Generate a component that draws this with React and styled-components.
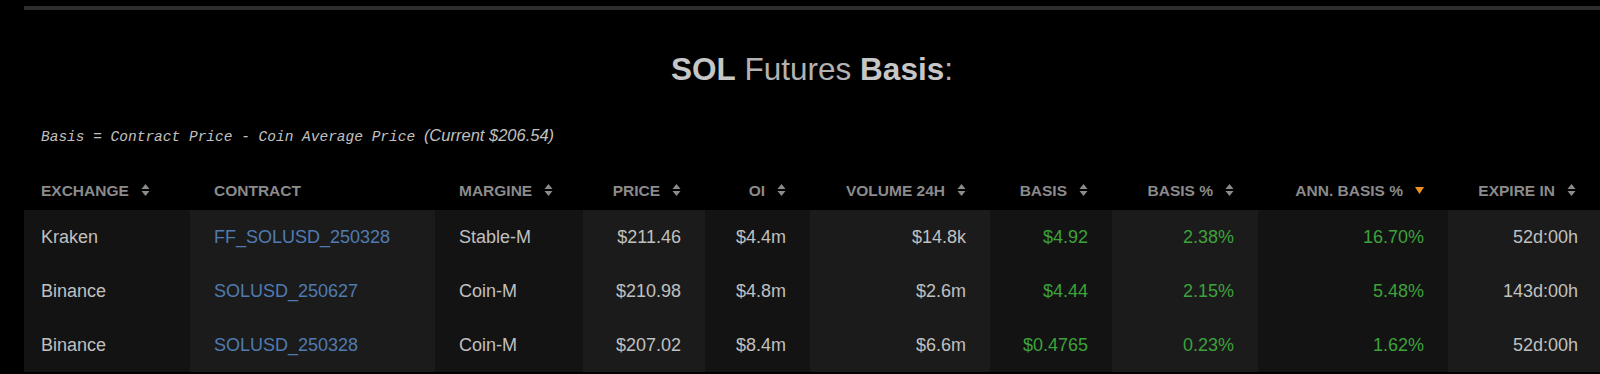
import React from "react";
import styled, { createGlobalStyle } from "styled-components";

const GlobalStyle = createGlobalStyle`
  html, body {
    margin: 0;
    background: #000;
    overflow: hidden;
  }
`;

const Page = styled.div`
  font-family: "Liberation Sans", Arial, Helvetica, sans-serif;
  background: #000;
  padding: 6px 0 0 24px;
  min-height: 374px;
  box-sizing: border-box;
`;

const Card = styled.section`
  border-top: 4px solid #2e2e2e;
`;

const Title = styled.h2`
  margin: 41px 0 0;
  text-align: center;
  font-size: 31.5px;
  line-height: 36px;
  font-weight: normal;
  color: #b2b2b2;

  b {
    color: #c6c6c6;
    font-weight: bold;
  }
`;

const Formula = styled.div`
  margin: 38px 0 0 17px;
  line-height: 20px;
  color: #c0c0c0;
  font-style: italic;
`;

const Mono = styled.span`
  font-family: "Liberation Mono", "DejaVu Sans Mono", monospace;
  font-size: 14.5px;
`;

const Current = styled.span`
  font-family: "Liberation Sans", Arial, sans-serif;
  font-size: 16.5px;
`;

const Table = styled.table`
  margin-top: 24px;
  width: 1576px;
  table-layout: fixed;
  border-collapse: collapse;
`;

const Th = styled.th`
  height: 39px;
  padding: 0 24px;
  padding-left: ${(p) => (p.$first ? "17px" : "24px")};
  text-align: ${(p) => (p.$right ? "right" : "left")};
  font-size: 15.5px;
  font-weight: bold;
  color: #8b8b8b;
  text-transform: uppercase;
  white-space: nowrap;
  vertical-align: middle;
`;

const Row = styled.tr`
  height: 54px;

  td:nth-child(odd) {
    background: #131313;
  }
  td:nth-child(even) {
    background: #1b1b1b;
  }
`;

const Td = styled.td`
  padding: 0 24px;
  padding-left: ${(p) => (p.$first ? "17px" : "24px")};
  padding-right: ${(p) => (p.$last ? "22px" : "24px")};
  text-align: ${(p) => (p.$right ? "right" : "left")};
  font-size: 18px;
  color: ${(p) => (p.$green ? "#3da23a" : "#c0c0c0")};
  white-space: nowrap;
  vertical-align: middle;
`;

const Link = styled.a`
  color: #4f7bb2;
  text-decoration: none;
`;

const SortIcon = styled.svg`
  width: 9px;
  height: 14px;
  margin-left: 12px;
  vertical-align: -1px;
`;

const Sort = ({ active }) => (
  <SortIcon viewBox="0 0 9 14">
    {active ? (
      <path d="M0 4 L9 4 L4.5 11 Z" fill="#f0921f" />
    ) : (
      <>
        <path d="M0.5 6 L4.5 1 L8.5 6 Z" fill="#8b8b8b" />
        <path d="M0.5 8 L8.5 8 L4.5 13 Z" fill="#8b8b8b" />
      </>
    )}
  </SortIcon>
);

const columns = [
  { key: "exchange", label: "Exchange", width: 166, sort: true },
  { key: "contract", label: "Contract", width: 245 },
  { key: "margine", label: "Margine", width: 148, sort: true },
  { key: "price", label: "Price", width: 122, sort: true, right: true },
  { key: "oi", label: "OI", width: 105, sort: true, right: true },
  { key: "volume", label: "Volume 24H", width: 180, sort: true, right: true },
  { key: "basis", label: "Basis", width: 122, sort: true, right: true, green: true },
  { key: "basisPct", label: "Basis %", width: 146, sort: true, right: true, green: true },
  { key: "annBasis", label: "Ann. Basis %", width: 190, active: true, right: true, green: true },
  { key: "expire", label: "Expire In", width: 152, sort: true, right: true },
];

const rows = [
  {
    exchange: "Kraken",
    contract: "FF_SOLUSD_250328",
    margine: "Stable-M",
    price: "$211.46",
    oi: "$4.4m",
    volume: "$14.8k",
    basis: "$4.92",
    basisPct: "2.38%",
    annBasis: "16.70%",
    expire: "52d:00h",
  },
  {
    exchange: "Binance",
    contract: "SOLUSD_250627",
    margine: "Coin-M",
    price: "$210.98",
    oi: "$4.8m",
    volume: "$2.6m",
    basis: "$4.44",
    basisPct: "2.15%",
    annBasis: "5.48%",
    expire: "143d:00h",
  },
  {
    exchange: "Binance",
    contract: "SOLUSD_250328",
    margine: "Coin-M",
    price: "$207.02",
    oi: "$8.4m",
    volume: "$6.6m",
    basis: "$0.4765",
    basisPct: "0.23%",
    annBasis: "1.62%",
    expire: "52d:00h",
  },
];

export default function App() {
  return (
    <>
      <GlobalStyle />
      <Page>
        <Card>
          <Title>
            <b>SOL</b> Futures <b>Basis</b>:
          </Title>
          <Formula>
            <Mono>Basis = Contract Price - Coin Average Price </Mono>
            <Current>(Current $206.54)</Current>
          </Formula>
          <Table>
            <colgroup>
              {columns.map((c) => (
                <col key={c.key} style={{ width: c.width }} />
              ))}
            </colgroup>
            <thead>
              <tr>
                {columns.map((c, i) => (
                  <Th key={c.key} $right={c.right} $first={i === 0}>
                    {c.label}
                    {(c.sort || c.active) && <Sort active={c.active} />}
                  </Th>
                ))}
              </tr>
            </thead>
            <tbody>
              {rows.map((r, ri) => (
                <Row key={ri}>
                  {columns.map((c, i) => (
                    <Td
                      key={c.key}
                      $right={c.right}
                      $green={c.green}
                      $first={i === 0}
                      $last={i === columns.length - 1}
                    >
                      {c.key === "contract" ? (
                        <Link href="#">{r[c.key]}</Link>
                      ) : (
                        r[c.key]
                      )}
                    </Td>
                  ))}
                </Row>
              ))}
            </tbody>
          </Table>
        </Card>
      </Page>
    </>
  );
}
